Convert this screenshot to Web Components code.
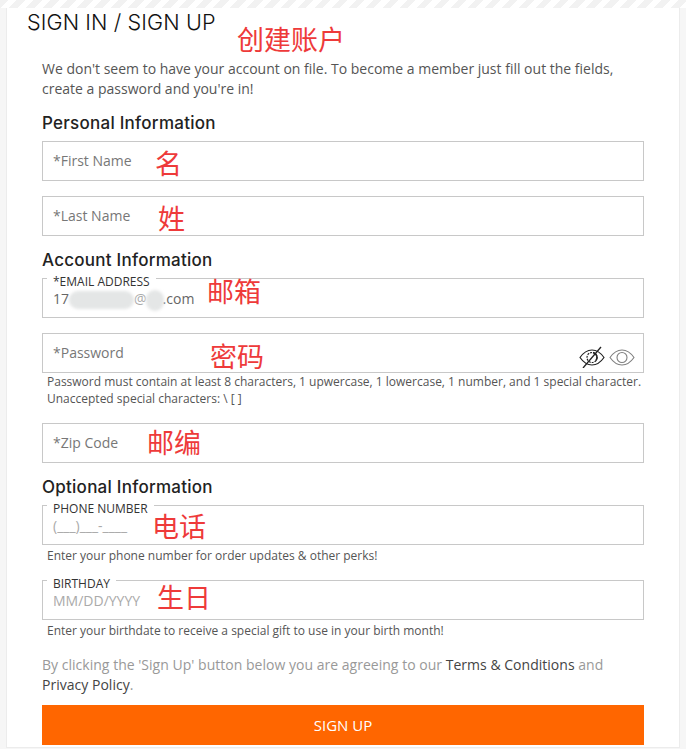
<!DOCTYPE html>
<html lang="en">
<head>
<meta charset="utf-8">
<title>Sign in / Sign up</title>
<style>
html, body { margin: 0; padding: 0; }
body { background: #f6f6f6; font-family: "Open Sans", sans-serif; height: 749px; overflow: hidden; }
</style>
</head>
<body>
<signup-card>
  <span slot="title">SIGN IN / SIGN UP</span>
  <red-note slot="title" style="left:230px;top:15px">创建账户</red-note>
  <intro-text>We don't seem to have your account on file. To become a member just fill out the fields, create a password and you're in!</intro-text>

  <section-head>Personal Information</section-head>
  <form-field placeholder="*First Name" note="名" note-x="112" note-y="5"></form-field>
  <form-field placeholder="*Last Name" note="姓" note-x="115" note-y="5" style="margin-top:15px"></form-field>

  <section-head>Account Information</section-head>
  <form-field label="*EMAIL ADDRESS" note="邮箱" note-x="164" note-y="-4">
    <span style="color:#666">17<blur-patch style="width:65px;height:18px"></blur-patch><span style="color:#aaa">@</span><blur-patch style="width:18px;height:21px;margin:0 -1px 0 -1px"></blur-patch>.com</span>
  </form-field>
  <form-field placeholder="*Password" note="密码" note-x="167" note-y="6" style="margin-top:15px">
    <eye-icons slot="end"></eye-icons>
  </form-field>
  <hint-text style="margin-top:0;line-height:17px">Password must contain at least 8 characters, 1 upwercase, 1 lowercase, 1 number, and 1 special character.<br>Unaccepted special characters: \ [ ]</hint-text>
  <form-field placeholder="*Zip Code" note="邮编" note-x="104" note-y="2" style="margin-top:16px"></form-field>

  <section-head>Optional Information</section-head>
  <form-field label="PHONE NUMBER" note="电话" note-x="109" note-y="4">
    <span style="color:#aaa">(___)___-____</span>
  </form-field>
  <hint-text style="margin-top:3px">Enter your phone number for order updates &amp; other perks!</hint-text>
  <form-field label="BIRTHDAY" note="生日" note-x="114" note-y="0" style="margin-top:16px">
    <span style="color:#aaa">MM/DD/YYYY</span>
  </form-field>
  <hint-text style="margin-top:3px">Enter your birthdate to receive a special gift to use in your birth month!</hint-text>

  <terms-text>By clicking the 'Sign Up' button below you are agreeing to our <a>Terms &amp; Conditions</a> and <a>Privacy Policy</a>.</terms-text>
  <sign-button>SIGN UP</sign-button>
</signup-card>

<script>
function define(name, html, setup) {
  customElements.define(name, class extends HTMLElement {
    constructor() {
      super();
      this.attachShadow({ mode: 'open' }).innerHTML = html;
    }
    connectedCallback() {
      if (setup) setup(this);
    }
  });
}

define('signup-card', `
<style>
:host { display: block; margin: 0 7px; height: 747px; background: #fff; box-shadow: 0 0 0 1px #ececec; box-sizing: border-box; position: relative; }
.stripes { height: 8px; margin: 0 -7px; background: repeating-linear-gradient(135deg, #f2f2f2 0 6px, #fff 6px 12px); }
h1 { margin: 0; padding: 2px 0 0 20px; height: 36px; box-sizing: border-box; font: 300 21.6px/24px Inter, sans-serif; letter-spacing: .1px; color: #111; position: relative; }
.body { padding: 15px 35px 0; }
</style>
<div class="stripes"></div>
<h1><slot name="title"></slot></h1>
<div class="body"><slot></slot></div>`);

define('red-note', `
<style>
:host { display: block; position: absolute; font: 400 27px/32px "Noto Sans CJK SC", sans-serif; color: #ee3a3a; white-space: nowrap; letter-spacing: 0; }
</style><slot></slot>`);

define('intro-text', `
<style>
:host { display: block; font: 400 14px/20px "Open Sans", sans-serif; color: #555; }
</style><slot></slot>`);

define('section-head', `
<style>
:host { display: block; margin: 14px 0 8px; font: 500 17px/20px Inter, sans-serif; letter-spacing: .25px; color: #222; }
</style><slot></slot>`);

define('hint-text', `
<style>
:host { display: block; padding-left: 5px; font: 400 12px/16px "Open Sans", sans-serif; color: #555; white-space: nowrap; }
</style><slot></slot>`);

define('blur-patch', `
<style>
:host { display: inline-block; vertical-align: middle; background: #e4e6e6; border-radius: 9px; filter: blur(1.5px); }
</style>`);

define('form-field', `
<style>
:host { display: block; position: relative; height: 40px; box-sizing: border-box; border: 1px solid #c8c8c8; background: #fff; font: 400 14px/20px "Open Sans", sans-serif; }
.box { display: flex; align-items: center; height: 100%; padding: 0 10px; color: #777; box-sizing: border-box; }
.box.up { align-items: flex-start; padding-top: 10px; }
label { position: absolute; left: 4px; top: -4px; padding: 0 6px; background: #fff; font-size: 12px; line-height: 14px; color: #333; }
.end { position: absolute; right: 8px; bottom: 4px; display: flex; }
</style>
<label hidden></label>
<div class="box"><span class="ph"></span><slot></slot></div>
<div class="end"><slot name="end"></slot></div>
<red-note></red-note>`, el => {
  const root = el.shadowRoot;
  const label = root.querySelector('label');
  const box = root.querySelector('.box');
  root.querySelector('.ph').textContent = el.getAttribute('placeholder') || '';
  if (el.hasAttribute('label')) {
    label.hidden = false;
    label.textContent = el.getAttribute('label');
    box.classList.add('up');
  }
  const note = root.querySelector('red-note');
  note.textContent = el.getAttribute('note');
  note.style.left = el.getAttribute('note-x') + 'px';
  note.style.top = el.getAttribute('note-y') + 'px';
});

define('eye-icons', `
<style>
:host { display: flex; gap: 4px; align-items: center; }
svg { display: block; fill: none; }
</style>
<svg width="26" height="22" viewBox="0 0 26 22" stroke="#222" stroke-width="1.2">
  <path d="M1 11.500C4.500 6.500 9 4 13 4s8.500 2.500 12 7.500C21.500 16.500 17 19 13 19S4.500 16.500 1 11.500z"/>
  <circle cx="13" cy="11.500" r="5" stroke-dasharray="2 1"/>
  <path d="M14 6.500a5 5 0 0 1 3 8" stroke-width="1.600"/>
  <path d="M4 22L22 1" stroke-width="1.300"/>
</svg>
<svg width="26" height="22" viewBox="0 0 26 22" stroke="#808080" stroke-width="1.100">
  <path d="M1 11.500C4.500 6.500 9 4 13 4s8.500 2.500 12 7.500C21.500 16.500 17 19 13 19S4.500 16.500 1 11.500z"/>
  <circle cx="13" cy="11.500" r="5"/>
</svg>`);

define('terms-text', `
<style>
:host { display: block; margin-top: 16px; font: 400 14px/20px "Open Sans", sans-serif; letter-spacing: .02px; color: #999; }
::slotted(a) { color: #444; }
</style><slot></slot>`);

define('sign-button', `
<style>
:host { display: block; margin-top: 10px; height: 40px; background: #ff6600; color: #fff; text-align: center; font: 400 15px/40px "Open Sans", sans-serif; }
</style><slot></slot>`);
</script>
</body>
</html>
